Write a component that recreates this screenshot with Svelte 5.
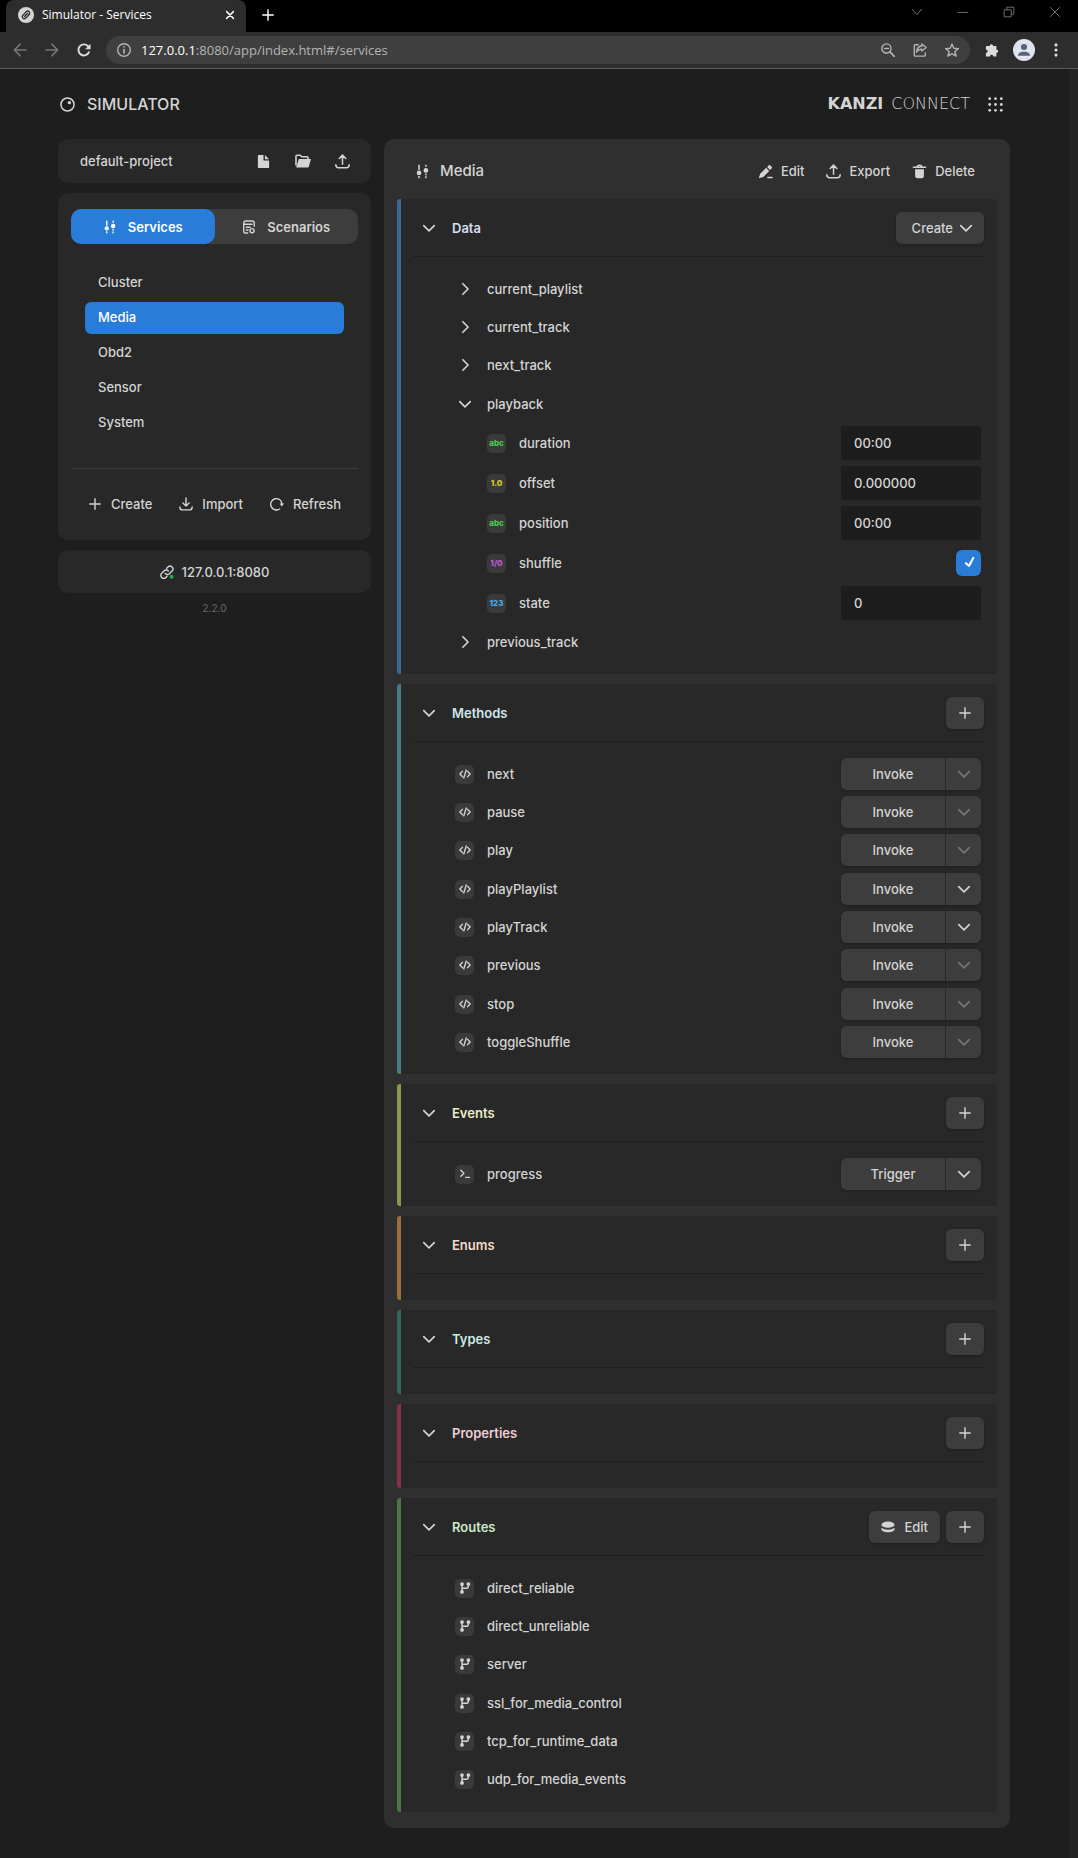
<script lang="ts">
  type Row = { name: string; type?: string; value?: string; args?: boolean };

  const services = ['Cluster', 'Media', 'Obd2', 'Sensor', 'System'];
  let selected = $state('Media');
  let tab = $state('services');
  let shuffle = $state(true);
  let playbackOpen = $state(true);

  const nodes = ['current_playlist', 'current_track', 'next_track', 'playback', 'previous_track'];
  const playback: Row[] = $state([
    { name: 'duration', type: 'abc', value: '00:00' },
    { name: 'offset', type: '1.0', value: '0.000000' },
    { name: 'position', type: 'abc', value: '00:00' },
    { name: 'shuffle', type: '1/0' },
    { name: 'state', type: '123', value: '0' },
  ]);
  const tones: Record<string, string> = { abc: 'green', '1.0': 'yellow', '1/0': 'purple', '123': 'blue' };

  const methods: Row[] = [
    { name: 'next' },
    { name: 'pause' },
    { name: 'play' },
    { name: 'playPlaylist', args: true },
    { name: 'playTrack', args: true },
    { name: 'previous' },
    { name: 'stop' },
    { name: 'toggleShuffle' },
  ];
  const events: Row[] = [{ name: 'progress', args: true }];
  const routes = [
    'direct_reliable',
    'direct_unreliable',
    'server',
    'ssl_for_media_control',
    'tcp_for_runtime_data',
    'udp_for_media_events',
  ];

  const sections = ['Data', 'Methods', 'Events', 'Enums', 'Types', 'Properties', 'Routes'];
  let closed: Record<string, boolean> = $state({});
</script>

{#snippet icon(name: string)}
  <svg class="icon" viewBox="0 0 16 16" aria-hidden="true">
    {#if name === 'down'}
      <path class="line chevron" d="M2 5.300 8 11.300l6-6" />
    {:else if name === 'right'}
      <path class="line chevron" d="M5.500 2 11.500 8l-6 6" />
    {:else if name === 'plus'}
      <path class="line" d="M8 2v12M2 8h12" />
    {:else if name === 'sliders'}
      <path class="line butt" d="M4.300.8v5.700M4.300 12.800v2.400M11.600.8v2.200M11.600 10v2M11.600 13v2.200" />
      <circle cx="4.300" cy="9.500" r="2.500" /><circle cx="11.600" cy="6.800" r="2.500" />
    {:else if name === 'upload'}
      <path class="line" d="M.9 11.500c0 2.200.8 3.200 3 3.200h8.200c2.200 0 3-1 3-3.200M8 11V1.500M4.500 4.700 8 1.200l3.500 3.500" />
    {:else if name === 'download'}
      <path class="line" d="M.9 11.500c0 2.200.8 3.200 3 3.200h8.200c2.200 0 3-1 3-3.200M8 1.200v8.800M4.500 6.900 8 10.400l3.500-3.500" />
    {:else if name === 'file'}
      <path d="M3 1h5v6h6v7a1 1 0 0 1-1 1H3a1 1 0 0 1-1-1V2a1 1 0 0 1 1-1zM9.500 1 14 5.500H9.500z" />
    {:else if name === 'folder'}
      <path class="line" d="M1 12V3.200c0-.7.4-1 1-1h3.200l1.500 1.500h5.300c.6 0 1 .4 1 1V6" />
      <path d="M3.800 6H16l-2.200 7.800a1 1 0 0 1-1 .7H1.200z" />
    {:else if name === 'scenario'}
      <path class="line" d="M6.500 14.800H3.800A1.800 1.800 0 0 1 2 13V3.400A2.200 2.200 0 0 1 4.200 1.200h7.600A2.200 2.200 0 0 1 14 3.400v3.800M2 4.900h9.500M5 8.200h4.500M5 11.400h2" />
      <circle cx="11.500" cy="12.200" r="2.300" class="line" />
    {:else if name === 'refresh'}
      <path class="line" d="M11 13.700A6.500 6.500 0 1 1 13.800 8" />
      <path d="M11 7.500h5l-2.500 3.300z" /><path class="line" d="M7.300 14.700h.8" />
    {:else if name === 'link'}
      <path class="line" d="M6 9.800A3.300 3.300 0 0 0 10.700 10l3.100-3.100A3.300 3.300 0 0 0 9.100 2.200L7.600 3.700M9.500 6.800a3.300 3.300 0 0 0-4.700-.2L1.900 9.500a3.300 3.300 0 0 0 4.700 4.700L8 12.800" />
      <circle class="online" cx="13.300" cy="13.300" r="2.300" />
    {:else if name === 'pencil'}
      <path d="M.8 15.200 2.300 10.500 8.700 4.100l3.300 3.300-6.400 6.400zM9.700 3.100l1.500-1.500a1.500 1.500 0 0 1 2.100 0l1.200 1.200a1.500 1.500 0 0 1 0 2.100L13 6.400z" />
      <path class="line" d="M10.500 14.500h4.500" />
    {:else if name === 'trash'}
      <path class="line" d="M1.500 3.500h13M5.500 2.800c.2-2 4.800-2 5 0" />
      <path d="M3.300 5.700h9.400v7a2.600 2.600 0 0 1-2.600 2.600H5.900a2.600 2.600 0 0 1-2.600-2.600z" />
    {:else if name === 'disks'}
      <ellipse cx="8" cy="5.300" rx="7.500" ry="3.500" />
      <path d="M.5 8.800c3.200 3 11.800 3 15 0v1.500c0 5-15 5-15 0z" />
    {:else if name === 'code'}
      <path class="line wide" d="M4.500 4.500 1.200 8l3.300 3.500M11.500 4.500 14.800 8l-3.300 3.500M9.600 2.800 6.400 13.200" />
    {:else if name === 'prompt'}
      <path class="line wide" d="M2.500 3 6.500 7l-4 4M9 12.500h5" />
    {:else if name === 'branch'}
      <path class="line wide" d="M4 3v10M12.500 3v2.500c0 2-1 2.800-3 2.800H4" />
      <circle cx="4" cy="2.800" r="2.500" /><circle cx="4" cy="13.200" r="2.500" /><circle cx="12.500" cy="2.800" r="2.500" />
    {:else if name === 'check'}
      <path class="line tick" d="M4.500 8.200 8 11.300 12.800 2.200" />
    {:else if name === 'knob'}
      <circle class="line" cx="8" cy="8" r="7" /><circle cx="10" cy="6" r="1.800" />
    {:else if name === 'grid'}
      {#each [1.8, 8, 14.2] as x}
        {#each [1.8, 8, 14.2] as y}<circle cx={x} cy={y} r="1.500" />{/each}
      {/each}
    {:else if name === 'chain'}
      <circle cx="8" cy="8" r="8" />
      <path class="line dark" d="M6.500 9.500 9.500 6.500M7 6l1.500-1.500a2 2 0 0 1 2.800 2.800L9.800 9M6.200 7 4.700 8.500a2 2 0 0 0 2.800 2.800L9 9.800" />
    {:else if name === 'close'}
      <path class="line wide" d="M3.500 3.500l9 9M12.500 3.500l-9 9" />
    {:else if name === 'back'}
      <path class="line wide" d="M15 8H2M8 1.500 1.500 8 8 14.500" />
    {:else if name === 'forward'}
      <path class="line wide" d="M1 8h13M8 1.500 14.500 8 8 14.500" />
    {:else if name === 'reload'}
      <path class="line heavy" d="M13.700 10.500A6.300 6.300 0 1 1 12.500 3.500L14 5" />
      <path d="M15.500.8V7H9.300z" />
    {:else if name === 'info'}
      <circle class="line" cx="8" cy="8" r="7.200" /><path class="line wide" d="M8 7.500v4M8 4.400v.2" />
    {:else if name === 'magnify'}
      <circle class="line" cx="6.200" cy="6.200" r="5.200" /><path class="line wide" d="M10.200 10.200l5 5" /><path class="line" d="M4 6.200h4.500" />
    {:else if name === 'share'}
      <path class="line" d="M6 2H2.500a1 1 0 0 0-1 1v11a1 1 0 0 0 1 1h10.500a1 1 0 0 0 1-1V11.500M10 1.200l5 4-5 4V7C7 7 5.500 8 4 10.500 4.500 6 7 3.700 10 3.500z" />
    {:else if name === 'star'}
      <path class="line" d="M8 1.200l2.100 4.800 5.200.4-4 3.400 1.300 5.100L8 12.200l-4.600 2.700 1.300-5.100L.7 6.400l5.200-.4z" />
    {:else if name === 'puzzle'}
      <path d="M2 3.500h3.300a2 2 0 1 1 4 0H13v4a2 2 0 1 1 0 4V15.500H9.600a2 2 0 0 0-4 0H1v-4.200a2 2 0 0 0 0-4V4.500a1 1 0 0 1 1-1z" />
    {:else if name === 'person'}
      <circle cx="8" cy="4.500" r="3.500" /><path d="M1 14.500c0-6 14-6 14 0z" />
    {:else if name === 'dots'}
      <circle cx="8" cy="2.200" r="1.800" /><circle cx="8" cy="8" r="1.800" /><circle cx="8" cy="13.800" r="1.800" />
    {:else if name === 'caret'}
      <path class="line thin" d="M2.500 4.500 8 11l5.500-6.500" />
    {:else if name === 'minimize'}
      <path class="line thin" d="M2 8.500h12" />
    {:else if name === 'restore'}
      <path class="line thin" d="M2.500 5.500h8v8h-8zM5.500 5.500v-3h8v8h-3" />
    {:else if name === 'quit'}
      <path class="line thin" d="M2.500 2.500l11 11M13.500 2.500l-11 11" />
    {/if}
  </svg>
{/snippet}

{#snippet callRow(row: Row, glyph: string, action: string)}
  <li class="row">
    <span class="tile">{@render icon(glyph)}</span>
    <span class="name">{row.name}</span>
    <div class="split">
      <button class="split-main">{action}</button>
      <button class="split-more" disabled={!row.args} aria-label="{row.name} arguments">{@render icon('down')}</button>
    </div>
  </li>
{/snippet}

<div class="browser">
  <div class="tabstrip">
    <div class="browser-tab">
      <span class="favicon">{@render icon('chain')}</span>
      <span class="tab-title">Simulator - Services</span>
      <button class="tab-close" aria-label="Close tab">{@render icon('close')}</button>
    </div>
    <button class="tab-new" aria-label="New tab">{@render icon('plus')}</button>
    <div class="window-controls">
      <button aria-label="Search tabs">{@render icon('caret')}</button>
      <button aria-label="Minimize">{@render icon('minimize')}</button>
      <button aria-label="Restore">{@render icon('restore')}</button>
      <button aria-label="Close">{@render icon('quit')}</button>
    </div>
  </div>
  <div class="toolbar">
    <div class="nav">
      <button class="faded" aria-label="Back">{@render icon('back')}</button>
      <button class="faded" aria-label="Forward">{@render icon('forward')}</button>
      <button aria-label="Reload">{@render icon('reload')}</button>
    </div>
    <div class="address">
      {@render icon('info')}
      <span class="url"><b>127.0.0.1</b>:8080/app/index.html#/services</span>
      <div class="address-tools">
        <button aria-label="Zoom">{@render icon('magnify')}</button>
        <button aria-label="Share">{@render icon('share')}</button>
        <button aria-label="Bookmark">{@render icon('star')}</button>
      </div>
    </div>
    <div class="extras">
      <button aria-label="Extensions">{@render icon('puzzle')}</button>
      <button class="avatar" aria-label="Profile">{@render icon('person')}</button>
      <button aria-label="Menu">{@render icon('dots')}</button>
    </div>
  </div>
</div>

<div class="viewport">
  <div class="page">
    <header class="top">
      {@render icon('knob')}
      <h1>SIMULATOR</h1>
      <a class="logo" href="#/"><strong>KANZI</strong><span>CONNECT</span></a>
      <button class="apps" aria-label="Apps">{@render icon('grid')}</button>
    </header>

    <div class="columns">
      <aside>
        <div class="card project">
          <span class="project-name">default-project</span>
          <button aria-label="New project">{@render icon('file')}</button>
          <button class="open" aria-label="Open project">{@render icon('folder')}</button>
          <button aria-label="Export project">{@render icon('upload')}</button>
        </div>

        <div class="card browse">
          <div class="tabs">
            <button class:active={tab === 'services'} onclick={() => (tab = 'services')}>{@render icon('sliders')}Services</button>
            <button class:active={tab === 'scenarios'} onclick={() => (tab = 'scenarios')}>{@render icon('scenario')}Scenarios</button>
          </div>
          <nav class="services">
            {#each services as service}
              <a href="#/services" class:selected={selected === service} onclick={() => (selected = service)}>{service}</a>
            {/each}
          </nav>
          <div class="actions">
            <button>{@render icon('plus')}Create</button>
            <button>{@render icon('download')}Import</button>
            <button>{@render icon('refresh')}Refresh</button>
          </div>
        </div>

        <button class="card server">{@render icon('link')}127.0.0.1:8080</button>
        <p class="version">2.2.0</p>
      </aside>

      <main>
        <div class="main-head">
          {@render icon('sliders')}
          <h2>{selected}</h2>
          <button>{@render icon('pencil')}Edit</button>
          <button>{@render icon('upload')}Export</button>
          <button>{@render icon('trash')}Delete</button>
        </div>

        <div class="sections">
          {#each sections as title}
            <section class={title.toLowerCase()}>
              <div class="section-head">
                <button class="toggle" aria-expanded={!closed[title]} onclick={() => (closed[title] = !closed[title])}>
                  {@render icon(closed[title] ? 'right' : 'down')}<span>{title}</span>
                </button>
                {#if title === 'Data'}
                  <button class="btn create">Create{@render icon('down')}</button>
                {:else}
                  {#if title === 'Routes'}
                    <button class="btn edit">{@render icon('disks')}Edit</button>
                  {/if}
                  <button class="btn add" aria-label="Add to {title}">{@render icon('plus')}</button>
                {/if}
              </div>

              <ul class="list">
                {#if closed[title]}
                  <!-- collapsed -->
                {:else if title === 'Data'}
                  {#each nodes as node}
                    {@const open = node === 'playback' && playbackOpen}
                    <li>
                      <button class="row node" onclick={() => node === 'playback' && (playbackOpen = !playbackOpen)}>
                        <span class="tile plain">{@render icon(open ? 'down' : 'right')}</span>
                        <span class="name">{node}</span>
                      </button>
                      {#if open}
                        <ul class="fields">
                          {#each playback as field}
                            <li class="row field">
                              <span class="tile {tones[field.type ?? '']}">{field.type}</span>
                              <label class="name" for="field-{field.name}">{field.name}</label>
                              {#if field.type === '1/0'}
                                <span class="checkbox">
                                  <input id="field-{field.name}" type="checkbox" bind:checked={shuffle} />
                                  {#if shuffle}{@render icon('check')}{/if}
                                </span>
                              {:else}
                                <input class="text" id="field-{field.name}" type="text" bind:value={field.value} />
                              {/if}
                            </li>
                          {/each}
                        </ul>
                      {/if}
                    </li>
                  {/each}
                {:else if title === 'Methods'}
                  {#each methods as method}{@render callRow(method, 'code', 'Invoke')}{/each}
                {:else if title === 'Events'}
                  {#each events as event}{@render callRow(event, 'prompt', 'Trigger')}{/each}
                {:else if title === 'Routes'}
                  {#each routes as route}
                    <li class="row">
                      <span class="tile">{@render icon('branch')}</span>
                      <span class="name">{route}</span>
                    </li>
                  {/each}
                {/if}
              </ul>
            </section>
          {/each}
        </div>
      </main>
    </div>
  </div>
  <div class="scrollbar"></div>
</div>

<style>
  :global(body) {
    margin: 0;
    background: #1e1e1e;
    color: #d4d4d4;
    font: 500 13px/20px Inter, 'Open Sans', sans-serif;
  }
  :global(*) {
    box-sizing: border-box;
  }

  button,
  input {
    font: inherit;
    color: inherit;
    border: 0;
    margin: 0;
    padding: 0;
    background: none;
  }
  button {
    display: flex;
    align-items: center;
    cursor: pointer;
  }
  a {
    color: inherit;
    text-decoration: none;
  }
  ul {
    list-style: none;
    margin: 0;
    padding: 0;
  }
  h1,
  h2,
  p {
    margin: 0;
    font-weight: 500;
  }

  .icon {
    display: block;
    width: 14px;
    height: 14px;
    flex: none;
    fill: currentColor;
  }
  .line {
    fill: none;
    stroke: currentColor;
    stroke-width: 1.6;
    stroke-linecap: round;
    stroke-linejoin: round;
  }
  .chevron {
    stroke-width: 1.9;
  }
  .wide {
    stroke-width: 1.9;
  }
  .heavy {
    stroke-width: 2.2;
  }
  .thin {
    stroke-width: 1;
    stroke-linecap: butt;
    stroke-linejoin: miter;
  }
  .butt {
    stroke-linecap: butt;
  }
  .tick {
    stroke-width: 2.4;
  }
  .dark {
    stroke: #2d2d2d;
    stroke-width: 1.3;
  }
  .online {
    fill: #1fb345;
  }

  /* browser chrome */
  .browser {
    font: 400 12px/18px 'Open Sans', 'Noto Sans', sans-serif;
    border-bottom: 1px solid #5a5a5a;
  }
  .tabstrip {
    display: flex;
    align-items: center;
    height: 32px;
    padding-left: 6px;
    background: #000;
  }
  .browser-tab {
    display: flex;
    align-items: center;
    gap: 8px;
    width: 240px;
    height: 32px;
    padding: 0 10px 2px 12px;
    border-radius: 8px 8px 0 0;
    background: #2d2d2d;
    color: #fff;
  }
  .favicon {
    color: #d4d4d4;
  }
  .favicon .icon {
    width: 16px;
    height: 16px;
  }
  .tab-title {
    flex: 1;
  }
  .tab-close .icon {
    width: 12px;
    height: 12px;
  }
  .tab-new {
    padding: 0 15px 2px;
    color: #fff;
  }
  .window-controls {
    display: flex;
    gap: 32px;
    margin-left: auto;
    padding: 0 16px 8px 0;
    color: #7c7c7c;
  }
  .toolbar {
    display: flex;
    align-items: center;
    height: 36px;
    background: #2d2d2d;
    color: #dcdcdc;
  }
  .nav {
    display: flex;
    gap: 18px;
    padding: 0 15px 0 13px;
  }
  .faded {
    color: #777;
  }
  .address {
    display: flex;
    align-items: center;
    gap: 10px;
    flex: 1;
    height: 28px;
    padding: 0 11px;
    border-radius: 14px;
    background: #3f3f3f;
    color: #b4b4b4;
    font-size: 13px;
  }
  .url {
    flex: 1;
  }
  .url b {
    color: #fff;
    font-weight: 400;
  }
  .address-tools {
    display: flex;
    gap: 18px;
  }
  .extras {
    display: flex;
    align-items: center;
    gap: 14px;
    padding: 0 15px;
  }
  .avatar {
    justify-content: center;
    width: 22px;
    height: 22px;
    border-radius: 50%;
    background: #dfe3ec;
    color: #54627c;
  }

  /* page */
  .viewport {
    display: flex;
  }
  .page {
    flex: 1;
    padding: 0 60px 30px 58px;
  }
  .scrollbar {
    width: 8px;
    background: #242424;
  }
  .top {
    display: flex;
    align-items: center;
    height: 70px;
    padding: 0 7px 0 2px;
  }
  .top h1 {
    flex: 1;
    margin-left: 12px;
    font-size: 16px;
  }
  .logo {
    display: flex;
    gap: 8px;
    font: 200 16px/20px 'DejaVu Sans', sans-serif;
  }
  .logo strong {
    font-weight: 700;
  }
  .apps {
    margin-left: 18px;
  }
  .top .icon {
    width: 15px;
    height: 15px;
  }

  .columns {
    display: grid;
    grid-template-columns: 313px 1fr;
    align-items: start;
    gap: 13px;
  }
  aside {
    display: grid;
    gap: 10px;
  }
  .card {
    border-radius: 10px;
    background: #282828;
  }
  .project {
    display: flex;
    align-items: center;
    gap: 23px;
    height: 44px;
    padding: 0 21px 0 22px;
  }
  .project-name {
    flex: 1;
  }
  .project .icon {
    width: 15px;
    height: 15px;
  }
  .project .open .icon {
    width: 18px;
    height: 16px;
  }
  .browse {
    padding: 16px 13px 26px;
  }
  .tabs {
    display: grid;
    grid-template-columns: 1fr 1fr;
    border-radius: 10px;
    background: #3d3d3d;
    font-weight: 600;
  }
  .tabs button {
    justify-content: center;
    gap: 11px;
    height: 35px;
    border-radius: 10px;
  }
  .tabs .active {
    background: #297cd8;
    color: #fff;
  }
  .services {
    display: grid;
    gap: 3px;
    padding: 23px 14px 29px;
    border-bottom: 1px solid #3d3d3d;
  }
  .services a {
    height: 32px;
    padding: 5px 13px;
    border-radius: 6px;
  }
  .services .selected {
    background: #297cd8;
    color: #fff;
  }
  .actions {
    display: flex;
    justify-content: space-between;
    padding: 25px 17px 0;
  }
  .actions button {
    gap: 9px;
  }
  .server {
    justify-content: center;
    gap: 8px;
    height: 43px;
  }
  .version {
    font-size: 10px;
    line-height: 10px;
    text-align: center;
    color: #5c5c5c;
  }

  main {
    padding: 0 13px 16px;
    border-radius: 10px;
    background: #2f2f2f;
  }
  .main-head {
    display: flex;
    align-items: center;
    gap: 22px;
    height: 60px;
    padding: 4px 22px 0 18px;
  }
  .main-head h2 {
    flex: 1;
    font-size: 15px;
    margin-left: -12px;
  }
  .main-head .icon {
    width: 15px;
    height: 15px;
  }
  .main-head button {
    gap: 8px;
  }

  .sections {
    display: grid;
    gap: 10px;
  }
  section {
    padding: 0 13px 0 12px;
    border-left: 4px solid;
    border-radius: 3px;
    background: #282828;
  }
  .data { border-color: #3b6595; }
  .methods { border-color: #467c88; }
  .events { border-color: #90964e; }
  .enums { border-color: #9c6f3a; }
  .types { border-color: #386460; }
  .properties { border-color: #863246; }
  .routes { border-color: #4c7549; }
  .data .toggle span { color: #d3def0; }
  .methods .toggle span { color: #cfe6ec; }
  .events .toggle span { color: #e8eac6; }
  .enums .toggle span { color: #efdccb; }
  .types .toggle span { color: #cbeae5; }
  .properties .toggle span { color: #efced6; }
  .routes .toggle span { color: #cce8c8; }

  .section-head {
    display: flex;
    align-items: center;
    gap: 6px;
    height: 58px;
    border-bottom: 1px solid #1e1e1e;
  }
  .toggle {
    flex: 1;
    gap: 16px;
    padding-left: 9px;
    font-weight: 600;
  }
  .btn {
    justify-content: center;
    height: 32px;
    border-radius: 6px;
    background: #3d3d3d;
    box-shadow: 0 1px 3px rgba(0, 0, 0, 0.25);
  }
  .create {
    gap: 6px;
    padding: 0 11px 0 16px;
  }
  .edit {
    gap: 9px;
    padding: 0 12px;
  }
  .add {
    width: 38px;
  }

  .list {
    display: grid;
    grid-auto-rows: minmax(38px, auto) minmax(38px, auto) minmax(39px, auto);
    padding: 13px 3px 13px 42px;
  }
  .row {
    display: flex;
    align-items: center;
    gap: 13px;
    height: 38px;
  }
  .node {
    width: 100%;
    text-align: left;
  }
  .fields {
    padding-left: 32px;
  }
  .field {
    height: 40px;
  }
  .name {
    flex: 1;
  }
  .tile {
    display: grid;
    place-items: center;
    width: 19px;
    height: 19px;
    border-radius: 5px;
    background: #3a3a3a;
    font-size: 8px;
    line-height: 18px;
    font-weight: 800;
  }
  .tile .icon {
    width: 12px;
    height: 12px;
  }
  .plain {
    background: none;
  }
  .plain .icon {
    width: 14px;
    height: 14px;
  }
  .green { color: #4cc552; }
  .yellow { color: #d9cf2c; }
  .purple { color: #c158d8; }
  .blue { color: #4ba9ee; }

  .text {
    width: 140px;
    height: 34px;
    padding: 0 13px;
    border-radius: 3px;
    background: #1d1d1d;
  }
  .checkbox {
    display: grid;
    place-items: center;
  }
  .checkbox > :global(*) {
    grid-area: 1 / 1;
  }
  .checkbox input {
    appearance: none;
    width: 25px;
    height: 26px;
    border-radius: 6px;
    background: #1d1d1d;
  }
  .checkbox input:checked {
    background: #297cd8;
  }
  .checkbox .icon {
    color: #fff;
    pointer-events: none;
  }
  .split {
    display: grid;
    grid-template-columns: 104px 35px;
    gap: 1px;
    border-radius: 6px;
    box-shadow: 0 1px 3px rgba(0, 0, 0, 0.25);
  }
  .split button {
    justify-content: center;
    height: 32px;
    background: #3d3d3d;
  }
  .split-main {
    border-radius: 6px 0 0 6px;
  }
  .split-more {
    border-radius: 0 6px 6px 0;
  }
  .split-more:disabled {
    color: #777;
  }
</style>
